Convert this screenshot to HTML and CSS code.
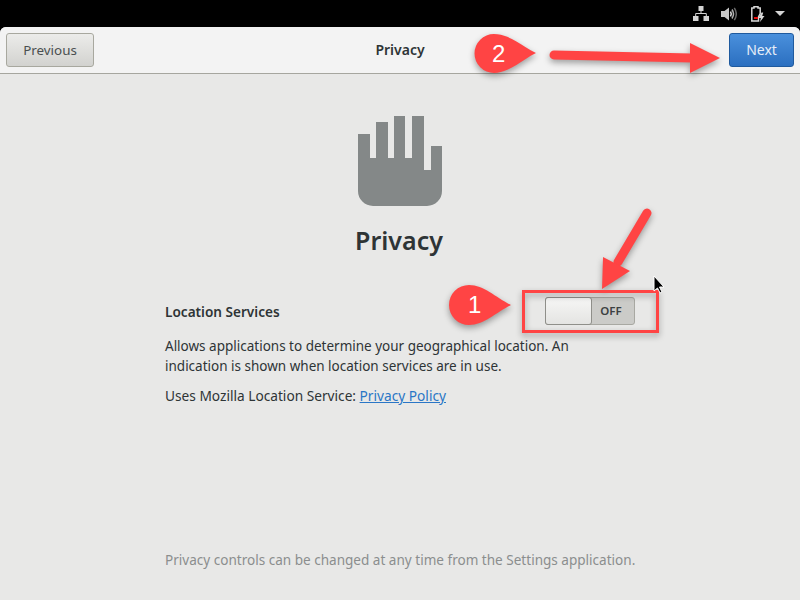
FILE: index.html
```html
<!DOCTYPE html>
<html lang="en">
<head>
    <meta charset="UTF-8">
    <title>Privacy</title>
    <link rel="stylesheet" href="styles.css">
</head>
<body>
    <div class="screen">
        <div class="topbar">
            <svg class="tray-network" width="16" height="16" viewBox="0 0 16 16">
                <path d="M5.500 0h5v5h-5zM0 10h5.500v5H0zM10.500 10H16v5h-5.500z" fill="#d4d4d4"/>
                <path d="M8 5v3M2.700 10V7.500h10.600V10" fill="none" stroke="#d4d4d4" stroke-width="1"/>
            </svg>
            <svg class="tray-volume" width="16" height="14" viewBox="0 0 16 14">
                <path d="M0 4h3.500L8 .5v13L3.500 10H0z" fill="#c8c8c8"/>
                <path d="M9.500 4.500q1.500 2.500 0 5" fill="none" stroke="#d8d8d8" stroke-width="1.500"/>
                <path d="M11 2.500q3 4.500 0 9" fill="none" stroke="#b0b0b0" stroke-width="1.500"/>
                <path d="M13.300 .8q4 6.200 0 12.400" fill="none" stroke="#686868" stroke-width="1.500"/>
            </svg>
            <svg class="tray-battery" width="14" height="16" viewBox="0 0 14 16">
                <path d="M3 1V.7h4V2h2.200v5.500L7.500 11v4H.8V2H3z" fill="none" stroke="#d8d8d8" stroke-width="1.500"/>
                <path d="M3 11h4v2H3z" fill="#e80a0a"/>
                <path d="M10.500 6.500 7.500 12h2.300L9 16l4.500-6h-2.300l1-3.500z" fill="#d8d8d8"/>
            </svg>
            <span class="tray-arrow"></span>
        </div>

        <div class="window">
            <div class="header">
                <button class="btn">Previous</button>
                <span class="header-title">Privacy</span>
                <button class="btn btn-next">Next</button>
            </div>

            <div class="content">
                <svg class="hand" width="84" height="90" viewBox="0 0 84 90">
                    <path d="M0 18h12v24h6V6h12v36h6V0h11v42h7V0h12v54h7V30h11v45a15 15 0 0 1-15 15H15A15 15 0 0 1 0 75z" fill="#848888"/>
                </svg>
                <h1>Privacy</h1>

                <div class="panel">
                    <div class="row">
                        <span class="row-label">Location Services</span>
                        <div class="switch">
                            <span class="switch-knob"></span>
                            <span class="switch-text">OFF</span>
                        </div>
                    </div>
                    <p class="desc">Allows applications to determine your geographical location. An indication is shown when location services are in use.</p>
                    <p class="desc uses">Uses Mozilla Location Service: <a href="#">Privacy Policy</a></p>
                </div>

                <p class="foot">Privacy controls can be changed at any time from the Settings application.</p>
            </div>
        </div>

        <svg class="marks" width="800" height="600" viewBox="0 0 800 600">
            <g class="mark-shapes">
                <path d="M536 53C520 45 509 34 494 34A19.500 19.500 0 0 0 494 73C509 73 520 61 536 53Z"/>
                <path d="M511 305C495 297 484 285 469 285A20 20 0 0 0 469 325C484 325 495 313 511 305Z"/>
                <path d="M554 55 692 58" class="shaft"/>
                <path d="M690 43 720 58 690 73Z"/>
                <path d="M647 213 618 262" class="shaft"/>
                <path d="M603 257 630 271 602 289Z"/>
                <rect x="523.500" y="291.500" width="134" height="40" class="box"/>
            </g>
            <text x="492" y="62" class="mark-num">2</text>
            <text x="468" y="313" class="mark-num">1</text>
            <path d="M654 276v15l3.500-3 2.500 5 2-1-2.500-5h4.500z" fill="#000" stroke="#fff" stroke-width="1"/>
        </svg>
    </div>
</body>
</html>
```

FILE: styles.css
```css
body {
    margin: 0;
    font-family: "Noto Sans", sans-serif;
    color: #2e3436;
}

.screen {
    position: relative;
    width: 800px;
    height: 600px;
    display: flex;
    flex-direction: column;
    background-color: #000000;
    overflow: hidden;
}

/* Top bar */
.topbar {
    height: 27px;
    flex-shrink: 0;
    display: flex;
    justify-content: flex-end;
    align-items: center;
    padding-right: 15px;
    box-sizing: border-box;
}

.tray-network { margin-right: 12px; }
.tray-volume { margin-right: 14px; }
.tray-battery { margin-right: 10px; }

.tray-arrow {
    width: 0;
    height: 0;
    border-left: 5px solid transparent;
    border-right: 5px solid transparent;
    border-top: 5px solid #d4d4d4;
}

/* Window */
.window {
    flex: 1;
    display: flex;
    flex-direction: column;
    background-color: #e8e8e7;
    border-radius: 6px 6px 0 0;
    overflow: hidden;
}

.header {
    height: 47px;
    flex-shrink: 0;
    display: flex;
    justify-content: space-between;
    align-items: center;
    padding: 0 6px 1px;
    box-sizing: border-box;
    background-color: #f3f3f3;
    border-bottom: 1px solid #a6a69f;
    position: relative;
}

.header-title {
    position: absolute;
    left: 0;
    right: 0;
    text-align: center;
    font-size: 14px;
    font-weight: 600;
}

.btn {
    height: 34px;
    width: 88px;
    padding: 0;
    font-family: inherit;
    font-size: 13.4px;
    color: #4a4f50;
    background: linear-gradient(#ececea, #d2d2cf);
    border: 1px solid #a8a89f;
    border-radius: 3px;
}

.btn-next {
    width: 65px;
    font-size: 14px;
    color: #e6eef8;
    background: linear-gradient(#4a90dc, #2b6fc0);
    border-color: #1f5a9e;
}

/* Content */
.content {
    flex: 1;
    display: flex;
    flex-direction: column;
    align-items: center;
    padding: 42px 0 30px;
}

.hand {
    display: block;
    flex-shrink: 0;
}

h1 {
    margin: 16px 2px 0 0;
    font-size: 25px;
    line-height: 36px;
    font-weight: 600;
    color: #2e3436;
}

.panel {
    width: 470px;
    margin-top: 39px;
    font-size: 13.6px;
    color: #2e3436;
}

.row {
    display: flex;
    justify-content: space-between;
    align-items: center;
    margin-bottom: 11px;
}

.row-label { font-weight: 600; }

.switch {
    width: 90px;
    height: 28px;
    box-sizing: border-box;
    display: flex;
    background-color: #cbcbc8;
    border: 1px solid #a8a8a2;
    border-radius: 3px;
}

.switch-knob {
    width: 45px;
    margin: -1px 0 -1px -1px;
    background: linear-gradient(#f6f6f5, #e4e4e2);
    border: 1px solid #8f8f8a;
    border-radius: 3px;
}

.switch-text {
    flex: 1;
    padding-right: 4px;
    text-align: center;
    font-size: 11.5px;
    font-weight: 600;
    line-height: 26px;
    color: #3c4042;
}

.desc {
    margin: 0;
    width: 420px;
    font-size: 13.5px;
    line-height: 20px;
    color: #2e3436;
}

.uses {
    margin-top: 10px;
    font-size: 13.7px;
}

.desc a {
    color: #2a76c6;
}

.foot {
    margin: auto 0 0;
    width: 470px;
    font-size: 13.55px;
    line-height: 20px;
    white-space: nowrap;
    color: #8b8e8e;
}

/* Annotations drawn on top of the screenshot */
.marks {
    position: absolute;
    top: 0;
    left: 0;
}

.mark-shapes {
    fill: #ff4444;
    filter: drop-shadow(0 3px 3px rgba(0, 0, 0, 0.35));
}

.shaft {
    fill: none;
    stroke: #ff4444;
    stroke-width: 9;
    stroke-linecap: round;
}

.box {
    fill: none;
    stroke: #ff4444;
    stroke-width: 3;
}

.mark-num {
    fill: #ffffff;
    font-family: "Liberation Sans", sans-serif;
    font-size: 24px;
}
```
